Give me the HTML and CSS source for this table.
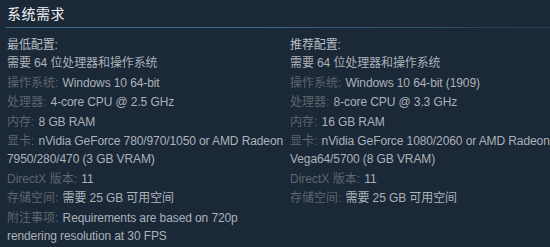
FILE: index.html
```html
<!DOCTYPE html>
<html lang="zh-CN">
<head>
<meta charset="utf-8">
<link rel="stylesheet" href="styles.css">
</head>
<body>
<div class="sysreq">
  <h2 class="title">系统需求</h2>
  <div class="cols">
    <div class="col col-left">
      <div class="heading">最低配置:</div>
      <ul class="list">
        <li>需要 64 位处理器和操作系统</li>
        <li><span class="label">操作系统:</span> Windows 10 64-bit</li>
        <li><span class="label">处理器:</span> 4-core CPU @ 2.5 GHz</li>
        <li><span class="label">内存:</span> 8 GB RAM</li>
        <li><span class="label">显卡:</span> nVidia GeForce 780/970/1050 or AMD Radeon 7950/280/470 (3 GB VRAM)</li>
        <li><span class="label">DirectX 版本:</span> 11</li>
        <li><span class="label">存储空间:</span> 需要 25 GB 可用空间</li>
        <li><span class="label">附注事项:</span> Requirements are based on 720p rendering resolution at 30 FPS</li>
      </ul>
    </div>
    <div class="col">
      <div class="heading">推荐配置:</div>
      <ul class="list">
        <li>需要 64 位处理器和操作系统</li>
        <li><span class="label">操作系统:</span> Windows 10 64-bit (1909)</li>
        <li><span class="label">处理器:</span> 8-core CPU @ 3.3 GHz</li>
        <li><span class="label">内存:</span> 16 GB RAM</li>
        <li><span class="label">显卡:</span> nVidia GeForce 1080/2060 or AMD Radeon Vega64/5700 (8 GB VRAM)</li>
        <li><span class="label">DirectX 版本:</span> 11</li>
        <li><span class="label">存储空间:</span> 需要 25 GB 可用空间</li>
      </ul>
    </div>
  </div>
</div>
</body>
</html>
```
FILE: styles.css
```css
html, body {
  margin: 0;
  padding: 0;
  background: #1b2838;
}
body {
  width: 550px;
  height: 247px;
  overflow: hidden;
  font-family: "Liberation Sans", Arial, "Noto Sans CJK SC", sans-serif;
}
.sysreq {
  padding: 5px 0 0 6px;
}
.title {
  margin: 0;
  padding: 0 0 3px 1px;
  font-size: 14px;
  line-height: 19px;
  font-weight: normal;
  color: #f0f2f4;
  letter-spacing: 0.5px;
  border-bottom: 1px solid transparent;
  border-image: linear-gradient(to right, #3b6e8c 0%, #3b6e8c 40%, rgba(59,110,140,0.35) 96%) 1;
}
.cols {
  display: grid;
  grid-template-columns: 283px 1fr;
  padding: 8px 0 0 1px;
  font-size: 12px;
  line-height: 18px;
  color: #acb2b8;
  letter-spacing: -0.1px;
}
.col-left {
  padding-right: 5px;
}
.heading {
  color: #b8bec4;
}
.list {
  list-style: none;
  margin: 0;
  padding: 0;
}
.list li {
  margin-bottom: 1.5px;
}
.label {
  color: #5e656e;
  letter-spacing: 0;
  margin-right: 1px;
}
```
